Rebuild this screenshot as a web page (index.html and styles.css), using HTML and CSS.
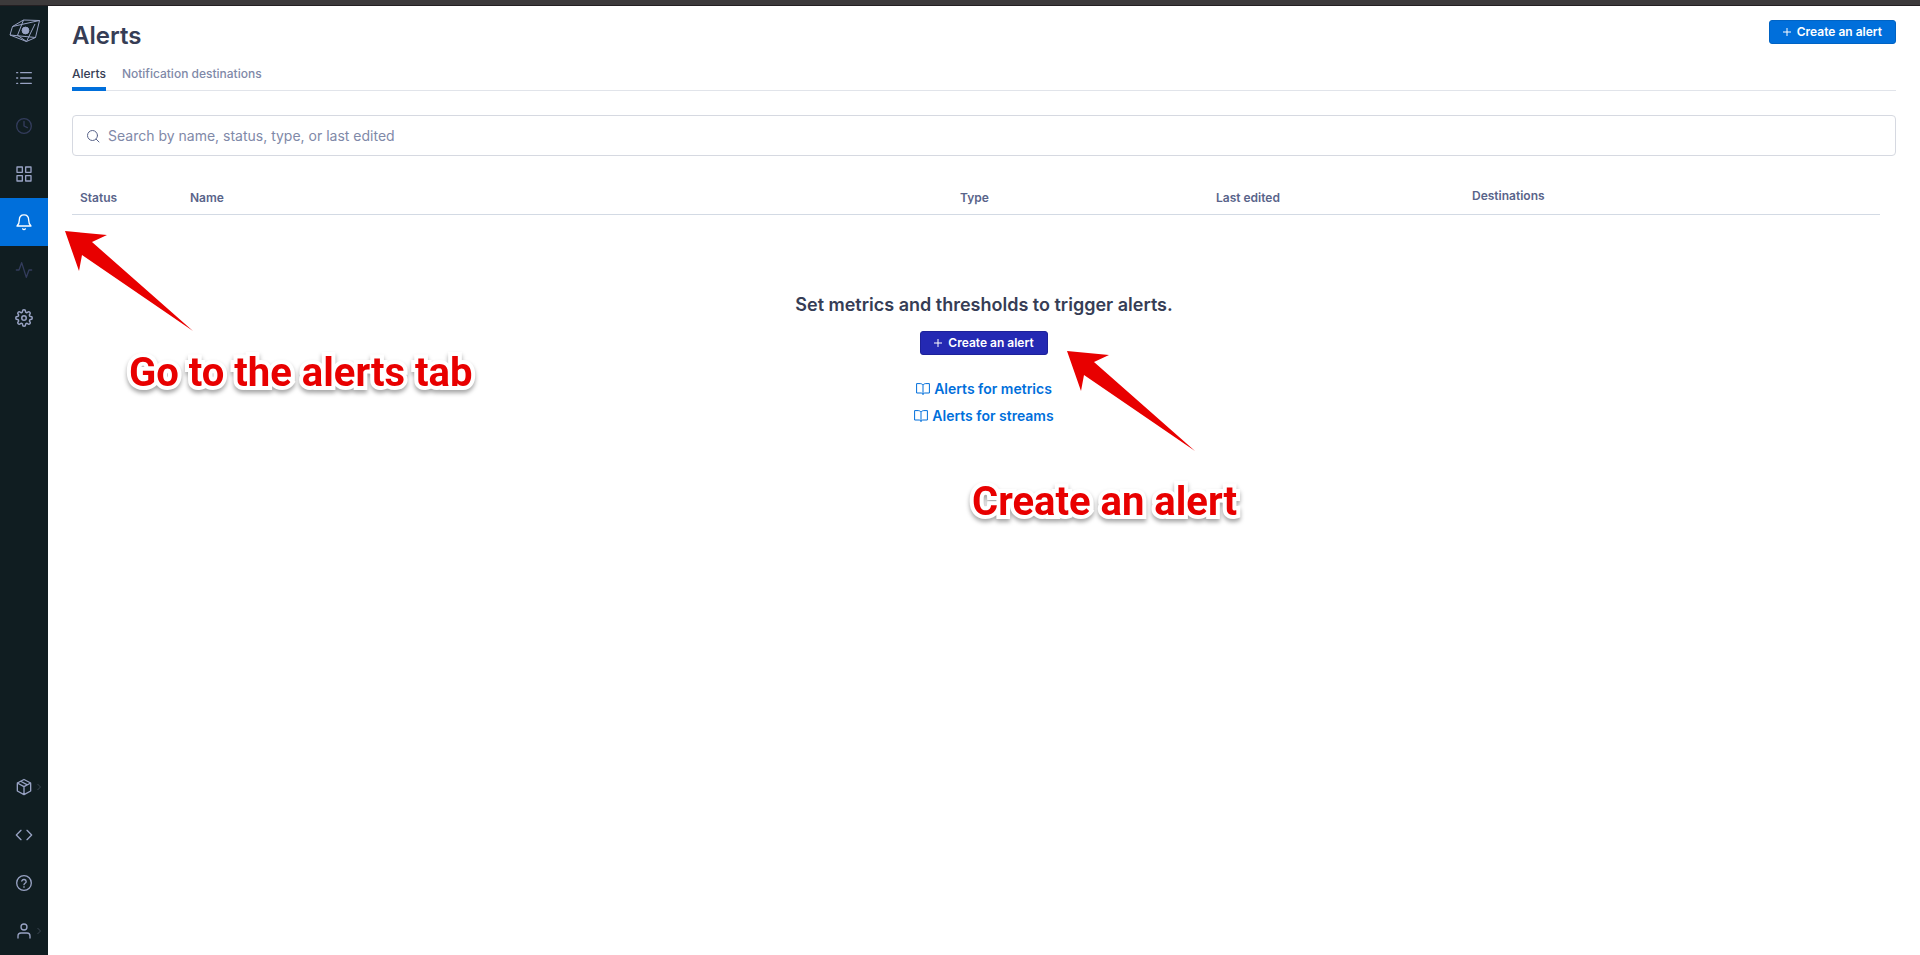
FILE: index.html
```html
<!DOCTYPE html>
<html lang="en">
<head>
<meta charset="utf-8">
<title>Alerts</title>
<link rel="stylesheet" href="styles.css">
</head>
<body>
<div class="topbar"></div>
<div class="app">
  <nav class="sidebar" aria-label="Main">
    <a class="nav-item" href="#" aria-label="Home">
      <svg class="logo" viewBox="-1 -1 32 24"><path d="M14.500 1 30.500 1.500 26.500 18.500 17.500 22.500 1 16 3.500 7.500ZM3.500 7.500 30.500 1.500M14.500 1 8.500 16.300 17.500 22.500 26 5M1 16 26.500 18.500"/><circle cx="16.500" cy="11.500" r="3.400"/></svg>
    </a>
    <a class="nav-item" href="#" aria-label="Streams"><svg class="icon" viewBox="0 0 24 24"><path d="M7 4h16M7 12h16M7 20h16M1 4h1.500M1 12h1.500M1 20h1.500"/></svg></a>
    <a class="nav-item dim" href="#" aria-label="History"><svg class="icon" viewBox="0 0 24 24"><circle cx="12" cy="12" r="11"/><path d="M12 5v7l5 2.500"/></svg></a>
    <a class="nav-item" href="#" aria-label="Dashboards"><svg class="icon" viewBox="0 0 24 24"><path d="M1.500 1.500h8v8h-8zM14.500 1.500h8v8h-8zM1.500 14.500h8v8h-8zM14.500 14.500h8v8h-8z"/></svg></a>
    <a class="nav-item active" href="#" aria-label="Alerts" aria-current="page"><svg class="icon" viewBox="0 0 24 24"><path d="M19 9c0-5-3-7.800-7-7.800S5 4 5 9c0 6-3.500 9-3.500 9h21S19 15 19 9ZM14 22.300a2.500 2.500 0 0 1-4 0"/></svg></a>
    <a class="nav-item dim" href="#" aria-label="Activity"><svg class="icon" viewBox="0 0 24 24"><path d="M23.500 12h-4L15.500 23 8.500 1 4.500 12h-4"/></svg></a>
    <a class="nav-item" href="#" aria-label="Settings"><svg class="icon gear" viewBox="0 0 24 24"><circle cx="12" cy="12" r="3"/><path d="M19.400 15a1.650 1.650 0 0 0 .33 1.820l.06.06a2 2 0 1 1-2.830 2.830l-.06-.06a1.650 1.650 0 0 0-2.820 1.170V21a2 2 0 0 1-4 0v-.09a1.650 1.650 0 0 0-2.900-1.260l-.06.06a2 2 0 1 1-2.830-2.830l.06-.06A1.650 1.650 0 0 0 3.090 14H3a2 2 0 0 1 0-4h.09a1.650 1.650 0 0 0 1.260-2.820l-.06-.06a2 2 0 1 1 2.830-2.830l.06.06A1.650 1.650 0 0 0 10 3.090V3a2 2 0 0 1 4 0v.09a1.650 1.650 0 0 0 2.820 1.260l.06-.06a2 2 0 1 1 2.830 2.830l-.06.06A1.650 1.650 0 0 0 20.910 10H21a2 2 0 0 1 0 4h-.09a1.650 1.650 0 0 0-1.510 1z"/></svg></a>
    <span class="spacer"></span>
    <a class="nav-item" href="#" aria-label="Packages"><svg class="icon" viewBox="0 0 24 24"><path d="M12 .8 22 6v12l-10 5.500L2 18V6ZM2 6l10 5.500L22 6M12 11.500v12M7 3.400l10 5.300"/></svg><svg class="caret" viewBox="0 0 4 8"><path d="m.5 1 3 3-3 3"/></svg></a>
    <a class="nav-item" href="#" aria-label="Developer"><svg class="icon" viewBox="0 0 24 24"><path d="m7.500 5-7 7 7 7M16.500 5l7 7-7 7"/></svg></a>
    <a class="nav-item" href="#" aria-label="Help"><svg class="icon" viewBox="0 0 24 24"><circle cx="12" cy="12" r="11"/><path d="M8.700 9a3.400 3.400 0 0 1 6.600 1c0 2.300-3.300 2.600-3.300 4.500M12 17.500v1"/></svg></a>
    <a class="nav-item" href="#" aria-label="Account"><svg class="icon" viewBox="0 0 24 24"><circle cx="12" cy="6" r="4.500"/><path d="M3 22.500v-3A4.500 4.500 0 0 1 7.500 15h9a4.500 4.500 0 0 1 4.500 4.500v3"/></svg><svg class="caret" viewBox="0 0 4 8"><path d="m.5 1 3 3-3 3"/></svg></a>
  </nav>
  <main class="main">
    <header class="header">
      <h1 class="title">Alerts</h1>
      <button class="button" type="button"><svg class="plus" viewBox="0 0 8 8"><path d="M4 0v8M0 4h8"/></svg>Create an alert</button>
    </header>
    <nav class="tabs" aria-label="Alert sections">
      <a class="tab selected" href="#">Alerts</a>
      <a class="tab" href="#">Notification destinations</a>
    </nav>
    <label class="search">
      <svg class="search-icon" viewBox="0 0 14 14"><circle cx="6.500" cy="6.500" r="5"/><path d="m10.200 10.200 2.800 2.800"/></svg>
      <input class="search-input" type="text" aria-label="Search alerts" placeholder="Search by name, status, type, or last edited">
    </label>
    <table class="table">
      <thead>
        <tr>
          <th class="col-status">Status</th>
          <th>Name</th>
          <th class="col-mid">Type</th>
          <th class="col-mid">Last edited</th>
          <th class="col-dest">Destinations</th>
        </tr>
      </thead>
    </table>
    <section class="empty">
      <h2 class="empty-title">Set metrics and thresholds to trigger alerts.</h2>
      <button class="button pressed" type="button"><svg class="plus" viewBox="0 0 8 8"><path d="M4 0v8M0 4h8"/></svg>Create an alert</button>
      <div class="links">
        <a class="link" href="#"><svg class="book" viewBox="0 0 14 12"><path d="M7 2v9.500M7 2C6 .8 5 .6 4 .6H.6V10H5c1 0 1.700.5 2 1.500.3-1 1-1.500 2-1.500h4.400V.6H10C9 .6 8 .8 7 2Z"/></svg>Alerts for metrics</a>
        <a class="link" href="#"><svg class="book" viewBox="0 0 14 12"><path d="M7 2v9.500M7 2C6 .8 5 .6 4 .6H.6V10H5c1 0 1.700.5 2 1.500.3-1 1-1.500 2-1.500h4.400V.6H10C9 .6 8 .8 7 2Z"/></svg>Alerts for streams</a>
      </div>
    </section>
  </main>
</div>
<svg class="arrow arrow-tab" viewBox="0 0 129 101"><path d="M0 0 42 4 27 11 128 100 17 24 14 40Z"/></svg>
<p class="note note-tab">Go to the alerts tab</p>
<svg class="arrow arrow-create" viewBox="0 0 129 101"><path d="M0 0 42 4 27 11 128 100 17 24 14 40Z"/></svg>
<p class="note note-create">Create an alert</p>
</body>
</html>
```
FILE: styles.css
```css
* { box-sizing: border-box; }

body {
  margin: 0;
  min-height: 100vh;
  display: flex;
  flex-direction: column;
  position: relative;
  background: #fff;
  color: #363d55;
  font-family: Inter, "Liberation Sans", sans-serif;
}

a { text-decoration: none; }
svg { display: block; fill: none; stroke: currentColor; }

.topbar {
  height: 6px;
  background: #3c3a3b;
  border-bottom: 1px solid #231f22;
}

.app { flex: 1; display: flex; }

.sidebar {
  width: 48px;
  display: flex;
  flex-direction: column;
  background: #101d21;
}

.nav-item {
  position: relative;
  height: 48px;
  display: flex;
  align-items: center;
  justify-content: center;
  color: #98a2c3;
}
.nav-item.dim { color: #333c5c; }
.nav-item.active { background: #006fdb; color: #fff; }
.spacer { flex: 1; }

.icon { width: 16px; height: 16px; stroke-width: 2; stroke-linejoin: round; stroke-linecap: round; overflow: visible; }
.icon.gear { width: 18px; height: 18px; }
.logo { width: 32px; height: 24px; stroke-width: 1; overflow: visible; }
.logo circle { fill: currentColor; }
.caret { position: absolute; right: 7px; top: 20px; width: 4px; height: 8px; color: #3b4653; }

.main { flex: 1; padding: 14px 24px; }

.header { display: flex; justify-content: space-between; align-items: flex-start; }
.title { margin: 0; font-size: 24px; line-height: 32px; font-weight: 600; }

.button {
  display: inline-flex;
  align-items: center;
  gap: 6px;
  height: 24px;
  padding: 0 13px;
  border: 1px solid #0063c4;
  border-radius: 3px;
  background: #006fdb;
  color: #fff;
  font: 600 12px/16px Inter, "Liberation Sans", sans-serif;
}
.button.pressed { background: #2429b3; border-color: #1d2199; }
.plus { width: 8px; height: 8px; stroke-width: 1; }

.tabs {
  display: flex;
  gap: 16px;
  margin-top: 12px;
  box-shadow: inset 0 -1px #e1e4ea;
}
.tab {
  padding-bottom: 3px;
  border-bottom: 4px solid transparent;
  color: #7f89a8;
  font-size: 12px;
  line-height: 20px;
  font-weight: 500;
}
.tab.selected { color: #363d55; border-color: #006fdb; }

.search {
  display: flex;
  align-items: center;
  gap: 8px;
  height: 41px;
  margin-top: 24px;
  padding: 0 13px;
  border: 1px solid #d6d9e1;
  border-radius: 4px;
}
.search-icon { width: 14px; height: 14px; color: #59648a; stroke-linecap: round; }
.search-input {
  flex: 1;
  border: 0;
  padding: 0;
  outline: 0;
  background: none;
  font: 400 14px/20px Inter, "Liberation Sans", sans-serif;
}
.search-input::placeholder { color: #7f89a8; opacity: 1; }

.table {
  width: calc(100% - 16px);
  margin-top: 32px;
  table-layout: fixed;
  border-collapse: collapse;
}
.table th {
  height: 26px;
  padding: 2px 8px 7px;
  border-bottom: 1px solid #d3dae4;
  color: #59648a;
  font-size: 12px;
  line-height: 16px;
  font-weight: 600;
  text-align: left;
  vertical-align: top;
}
.table .col-status { width: 110px; }
.table .col-mid { width: 256px; }
.table .col-dest { width: 416px; padding: 0 8px 7px; }

.empty {
  display: flex;
  flex-direction: column;
  align-items: center;
  margin-top: 78px;
}
.empty-title { margin: 0 0 14px; font-size: 18px; line-height: 24px; font-weight: 600; }
.links { display: flex; flex-direction: column; align-items: center; gap: 7px; margin-top: 24px; }
.link {
  display: flex;
  align-items: center;
  gap: 4px;
  color: #006fdb;
  font-size: 14px;
  line-height: 20px;
  font-weight: 600;
}
.book { width: 14px; height: 12px; }

.arrow { position: absolute; width: 129px; height: 101px; fill: #e80000; stroke: none; }
.arrow-tab { left: 65px; top: 231px; }
.arrow-create { left: 1067px; top: 351px; }

.note {
  position: absolute;
  margin: 0;
  color: #e80000;
  font: 700 40px/48px Roboto, "Liberation Sans", sans-serif;
  white-space: nowrap;
  -webkit-text-stroke: 8px #fff;
  paint-order: stroke fill;
  filter: drop-shadow(0 3px 2px rgba(0, 0, 0, .35));
}
.note-tab { left: 129px; top: 349px; }
.note-create { left: 972px; top: 478px; }
```
